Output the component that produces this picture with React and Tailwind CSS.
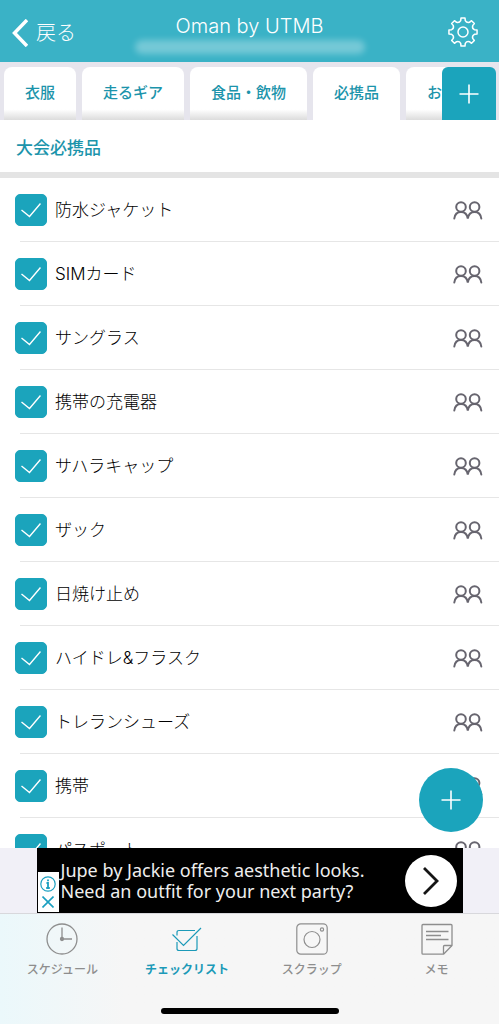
import React, { useState } from "react";

const FONT = "font-['Inter','Noto_Sans_CJK_JP',sans-serif]";

const TABS = ["衣服", "走るギア", "食品・飲物", "必携品", "お土産"];

const ITEMS = [
  "防水ジャケット",
  "SIMカード",
  "サングラス",
  "携帯の充電器",
  "サハラキャップ",
  "ザック",
  "日焼け止め",
  "ハイドレ&フラスク",
  "トレランシューズ",
  "携帯",
  "パスポート",
];

// Eight teeth joined by rounded valleys.
function gearPath() {
  const c = 15;
  const teeth = 8;
  const at = (angle, r) => `${(c + r * Math.cos(angle)).toFixed(2)} ${(c + r * Math.sin(angle)).toFixed(2)}`;
  let d = "";
  for (let i = 0; i < teeth; i++) {
    const mid = (i * 2 * Math.PI) / teeth - Math.PI / 2;
    d += i === 0 ? `M${at(mid - 0.2, 11.6)}` : `A3.6 3.6 0 0 0 ${at(mid - 0.2, 11.6)}`;
    d += `L${at(mid - 0.14, 14.2)}L${at(mid + 0.14, 14.2)}L${at(mid + 0.2, 11.6)}`;
  }
  return `${d}A3.6 3.6 0 0 0 ${at(-Math.PI / 2 - 0.2, 11.6)}Z`;
}

function GearIcon() {
  return (
    <svg viewBox="0 0 30 30" className="size-[30px]" fill="none" stroke="white" strokeWidth="1.5" strokeLinejoin="round" aria-hidden="true">
      <path d={gearPath()} />
      <circle cx="15" cy="15" r="5" />
    </svg>
  );
}

function PlusIcon() {
  return (
    <svg viewBox="0 0 20 20" className="size-5" stroke="white" strokeWidth="1.6" aria-hidden="true">
      <path d="M10 0.5V19.5M0.5 10H19.5" />
    </svg>
  );
}

function PeopleIcon() {
  return (
    <svg viewBox="0 0 30 20" className="h-5 w-[30px]" fill="none" stroke="#67656f" strokeWidth="2" strokeLinecap="round" aria-hidden="true">
      <circle cx="8" cy="7" r="4.8" />
      <circle cx="21.600" cy="7" r="4.8" />
      <path d="M1.300 18.500C1.800 14.500 4.200 12 8 12S14.200 14.500 14.800 18.500C15.400 14.500 17.800 12 21.600 12S27.800 14.500 28.300 18.500" />
    </svg>
  );
}

function ClockIcon() {
  return (
    <svg viewBox="0 0 32 32" className="size-8" fill="none" stroke="currentColor" strokeWidth="1.3" aria-hidden="true">
      <circle cx="16" cy="16" r="15" />
      <path d="M16 4.500V14.500M17.500 16H26" />
      <circle cx="16" cy="16" r="1.500" fill="currentColor" />
    </svg>
  );
}

function ChecklistIcon() {
  return (
    <svg viewBox="0 0 32 32" className="size-8" fill="none" stroke="currentColor" strokeWidth="1.2" aria-hidden="true">
      <path d="M24 7.500H8Q6 7.500 6 9.500V12.500M6 19V25.500Q6 27.500 8 27.500H24Q26 27.500 26 25.500V13" />
      <path d="M1.500 11.500L12.500 22.500L30 5" />
    </svg>
  );
}

function ScrapIcon() {
  return (
    <svg viewBox="0 0 32 32" className="size-8" fill="none" stroke="currentColor" strokeWidth="1.2" aria-hidden="true">
      <rect x="0.800" y="0.800" width="30.400" height="30.400" rx="4" />
      <circle cx="16" cy="16.500" r="8" />
      <circle cx="26" cy="6.500" r="1.600" />
    </svg>
  );
}

function MemoIcon() {
  return (
    <svg viewBox="0 0 32 32" className="size-8" fill="none" stroke="currentColor" strokeWidth="1.300" strokeLinejoin="round" aria-hidden="true">
      <path d="M1 2.500Q1 1.500 2 1.500H30Q31 1.500 31 2.500V22.500L22.500 31.200H2Q1 31.200 1 30.200Z" />
      <path d="M22.500 31V23.500Q22.500 22.500 23.500 22.500H31" />
      <path d="M5 8.500H27.500M5 12.500H20M5 16.500H27.500" />
    </svg>
  );
}

const NAV = [
  { label: "スケジュール", Icon: ClockIcon },
  { label: "チェックリスト", Icon: ChecklistIcon, active: true },
  { label: "スクラップ", Icon: ScrapIcon },
  { label: "メモ", Icon: MemoIcon },
];

function Header() {
  return (
    <header className="grid h-[62px] shrink-0 grid-cols-[1fr_auto_1fr] items-center bg-[#3ab2c6] text-white">
      <button type="button" className="flex items-center gap-2 justify-self-start pt-1 pl-3 text-xl font-light">
        <svg viewBox="0 0 16 28" className="h-7 w-4" fill="none" stroke="white" strokeWidth="3.500" aria-hidden="true">
          <path d="M15 1L2.500 14L15 27" />
        </svg>
        戻る
      </button>
      <div className="flex flex-col items-center pt-1">
        <h1 className="text-xl leading-7 font-light">Oman by UTMB</h1>
        <div className="h-[14px] w-[230px] rounded-full bg-white/30 blur-[3px]" />
      </div>
      <button type="button" aria-label="設定" className="justify-self-end pt-[2px] pr-[21px]">
        <GearIcon />
      </button>
    </header>
  );
}

function CategoryTabs({ current, onChange }) {
  return (
    <nav className="relative h-[58px] shrink-0 overflow-hidden bg-[#e6e5ed] pt-[5px]">
      <div className="flex h-full gap-[6px] pl-1">
        {TABS.map((tab) => (
          <button
            key={tab}
            type="button"
            onClick={() => onChange(tab)}
            className={
              tab === current
                ? "shrink-0 rounded-t-lg bg-white px-[21px] text-[15px] font-medium text-[#1c94ab]"
                : "shrink-0 rounded-t-lg bg-linear-to-t from-[#dcdcdc] via-white via-20% to-white px-[21px] text-[15px] font-medium text-[#1c94ab]"
            }
          >
            {tab}
          </button>
        ))}
      </div>
      <button
        type="button"
        aria-label="カテゴリを追加"
        className="absolute top-[5px] right-[3px] bottom-0 flex w-[54px] items-center justify-center rounded-t-md bg-[#1ba4bc]"
      >
        <PlusIcon />
      </button>
    </nav>
  );
}

function ItemRow({ label, checked, onToggle }) {
  return (
    <li className="ml-5 flex h-16 items-center border-b border-[#e6e6e6] pr-4">
      <label className="-ml-[5px] flex flex-1 items-center gap-2 text-[17px] leading-6 font-light text-black">
        <span className="grid size-8 place-items-center">
          <input
            type="checkbox"
            checked={checked}
            onChange={onToggle}
            className="col-start-1 row-start-1 size-8 appearance-none rounded-[5px] border border-[#1ba4bc] checked:bg-[#1ba4bc]"
          />
          <svg viewBox="0 0 20 16" className="pointer-events-none col-start-1 row-start-1 h-4 w-5" fill="none" stroke="white" strokeWidth="1.400" aria-hidden="true">
            <path d="M0.500 8L8.500 14.500L19.500 1.500" />
          </svg>
        </span>
        {label}
      </label>
      <PeopleIcon />
    </li>
  );
}

function AdBanner() {
  return (
    <aside className="flex h-[65px] shrink-0 justify-center bg-[#f1f0f7]">
      <div className="flex w-[426px] items-center bg-black pr-[6px]">
        <div className="flex h-full w-[22px] flex-col justify-end pb-px pl-px">
          <div className="flex h-10 flex-col items-center justify-evenly bg-white">
            <svg viewBox="0 0 16 16" className="size-4" fill="none" stroke="#1a9fc0" strokeWidth="1.200" aria-hidden="true">
              <circle cx="8" cy="8" r="7.200" />
              <path d="M8 3.500V5.200M6.500 7H8V12M6.200 12H9.800" strokeWidth="1.800" />
            </svg>
            <svg viewBox="0 0 12 12" className="size-3" stroke="#1a9fc0" strokeWidth="1.600" aria-hidden="true">
              <path d="M0.500 0.500L11.500 11.500M11.500 0.500L0.500 11.500" />
            </svg>
          </div>
        </div>
        <p className="flex-1 pl-[2px] font-['Noto_Sans',sans-serif] text-[18px] leading-[21px] whitespace-nowrap text-[#eeeeee]">
          Jupe by Jackie offers aesthetic looks.
          <br />
          Need an outfit for your next party?
        </p>
        <a href="#ad" aria-label="開く" className="flex size-[52px] shrink-0 items-center justify-center rounded-full bg-white">
          <svg viewBox="0 0 16 28" className="h-7 w-4" fill="none" stroke="#151515" strokeWidth="2.800" aria-hidden="true">
            <path d="M1 1L14 14L1 27" />
          </svg>
        </a>
      </div>
    </aside>
  );
}

function BottomNav() {
  return (
    <footer className="flex h-[111px] shrink-0 flex-col justify-between border-t border-[#d8d8dc] bg-linear-to-r from-[#ebf8fb] via-[#f6f6f6] via-25% to-[#f6f6f6] pt-[9px] pb-[10px]">
      <nav className="grid grid-cols-4">
        {NAV.map(({ label, Icon, active }) => (
          <a
            key={label}
            href="#"
            className={
              active
                ? "flex flex-col items-center gap-[5px] text-[12px] leading-5 font-bold text-[#1c9ab8]"
                : "flex flex-col items-center gap-[5px] text-[12px] leading-5 font-medium text-[#8e8e8e]"
            }
          >
            <Icon />
            {label}
          </a>
        ))}
      </nav>
      <div className="mx-auto h-[6px] w-[178px] rounded-full bg-black" />
    </footer>
  );
}

export default function App() {
  const [tab, setTab] = useState("必携品");
  const [checked, setChecked] = useState(() => ITEMS.map(() => true));
  const toggle = (i) => setChecked((prev) => prev.map((v, n) => (n === i ? !v : v)));

  return (
    <div className={`${FONT} flex h-screen flex-col bg-white`}>
      <Header />
      <CategoryTabs current={tab} onChange={setTab} />
      <h2 className="shrink-0 border-b-[6px] border-[#e4e4e4] px-4 pt-4 pb-3 text-[17px] leading-6 font-medium text-[#1c94ab]">
        大会必携品
      </h2>
      <main className="relative min-h-0 flex-1">
        <ul className="h-full overflow-y-auto [scrollbar-width:none]">
          {ITEMS.map((item, i) => (
            <ItemRow key={item} label={item} checked={checked[i]} onToggle={() => toggle(i)} />
          ))}
        </ul>
        <button
          type="button"
          aria-label="項目を追加"
          className="absolute right-4 bottom-4 flex size-16 items-center justify-center rounded-full bg-[#1ba4bc]"
        >
          <PlusIcon />
        </button>
      </main>
      <AdBanner />
      <BottomNav />
    </div>
  );
}
